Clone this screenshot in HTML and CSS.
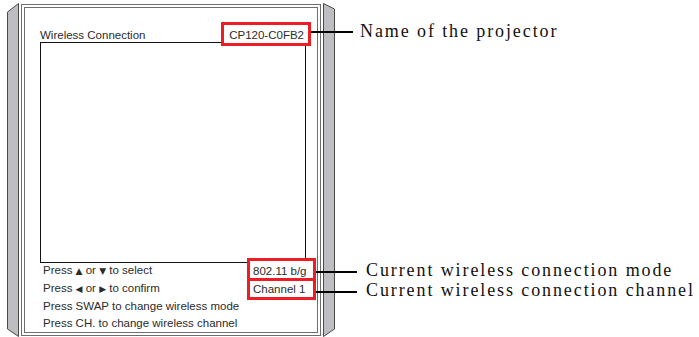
FILE: index.html
```html
<!DOCTYPE html>
<html>
<head>
<meta charset="utf-8">
<link rel="stylesheet" href="styles.css">
</head>
<body>
<div class="stage">
  <div class="device-row">
    <svg class="bevel bevel-left" width="12" height="334" viewBox="0 0 12 334">
      <polygon points="0.5,9 11.5,0.5 11.5,333.5 0.5,326" />
    </svg>
    <div class="device">
      <div class="frame">
        <div class="header">
          <span class="title">Wireless Connection</span>
          <span class="name-box">CP120-C0FB2</span>
        </div>
        <div class="screen"></div>
        <div class="footer">
          <div class="lines">
            <div>Press <span class="tri">▲</span> or <span class="tri">▼</span> to select</div>
            <div>Press <span class="tri">◀</span> or <span class="tri">▶</span> to confirm</div>
            <div>Press SWAP to change wireless mode</div>
            <div>Press CH. to change wireless channel</div>
          </div>
          <div class="status-box">
            <div class="status mode">802.11 b/g</div>
            <div class="status channel">Channel 1</div>
          </div>
        </div>
      </div>
    </div>
    <svg class="bevel bevel-right" width="12" height="334" viewBox="0 0 12 334">
      <polygon points="0.5,0.5 11.5,6 11.5,326 0.5,333.5" />
    </svg>
  </div>

  <div class="leader leader-name"></div>
  <div class="label label-name">Name of the projector</div>
  <div class="leader leader-mode"></div>
  <div class="label label-mode">Current wireless connection mode</div>
  <div class="leader leader-channel"></div>
  <div class="label label-channel">Current wireless connection channel</div>
</div>
</body>
</html>
```

FILE: styles.css
```css
html, body {
  margin: 0;
  padding: 0;
  background: #ffffff;
}

.stage {
  position: relative;
  width: 699px;
  height: 337px;
  overflow: hidden;
}

.device-row {
  display: flex;
  align-items: flex-start;
  gap: 2px;
  padding: 3px 0 0 7px;
}

.bevel polygon {
  fill: #bebec2;
  stroke: #4a4a4a;
  stroke-width: 1;
}

.device {
  box-sizing: border-box;
  width: 300px;
  height: 332px;
  margin-top: 1px;
  border: 1px solid #6e6e6e;
  padding: 2px;
}

.frame {
  box-sizing: border-box;
  height: 326px;
  border: 1px solid #6e6e6e;
  display: flex;
  flex-direction: column;
  font-family: "Liberation Sans", Arial, sans-serif;
  font-size: 11.5px;
  color: #2b2b2b;
}

.header {
  box-sizing: border-box;
  height: 34px;
  display: flex;
  justify-content: space-between;
  align-items: flex-end;
  padding: 0 6px 0 15px;
}

.title {
  line-height: 12px;
  margin-bottom: 1px;
}

.name-box {
  position: relative;
  z-index: 1;
  box-sizing: border-box;
  height: 24px;
  margin-bottom: -4px;
  border: 3px solid #ee1c24;
  background: #ffffff;
  padding: 2px 4px 0 5px;
  line-height: 16px;
}

.screen {
  box-sizing: border-box;
  height: 224px;
  margin: 0 11px 0 15px;
  border: 1px solid #111111;
}

.footer {
  display: flex;
  justify-content: space-between;
  align-items: flex-start;
  padding: 0 1px 0 18px;
  margin-top: -1px;
}

.lines {
  line-height: 17px;
  white-space: nowrap;
}

.tri {
  font-family: "DejaVu Sans", sans-serif;
  font-size: 9px;
  vertical-align: 0;
}

.status-box {
  position: relative;
  z-index: 1;
  box-sizing: border-box;
  width: 69px;
  margin-top: -4px;
  border: 3px solid #ee1c24;
  background: #ffffff;
}

.status {
  padding-left: 3px;
  white-space: nowrap;
}

.mode {
  height: 17px;
  line-height: 20px;
}

.channel {
  border-top: 3px solid #ee1c24;
  height: 16px;
  line-height: 16px;
}

.leader {
  position: absolute;
  height: 2px;
  background: #000000;
}

.leader-name {
  left: 310px;
  top: 31px;
  width: 43px;
}

.leader-mode {
  left: 315px;
  top: 271px;
  width: 42px;
}

.leader-channel {
  left: 315px;
  top: 291px;
  width: 42px;
}

.label {
  position: absolute;
  font-family: "Liberation Serif", "Times New Roman", serif;
  font-size: 18px;
  line-height: 20px;
  letter-spacing: 1.9px;
  color: #111111;
  white-space: nowrap;
}

.label-name {
  left: 360px;
  top: 21px;
}

.label-mode {
  left: 366px;
  top: 260px;
}

.label-channel {
  left: 366px;
  top: 280px;
}
```
